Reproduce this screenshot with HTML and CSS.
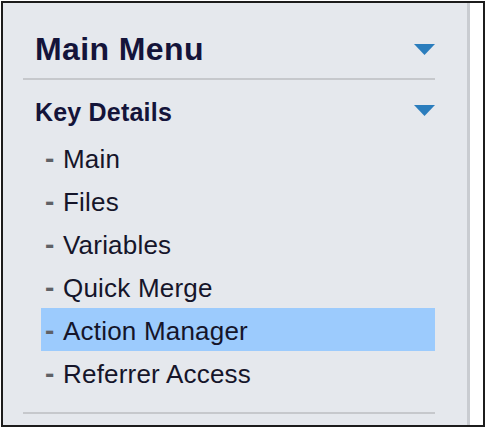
FILE: index.html
```html
<!DOCTYPE html>
<html>
<head>
<meta charset="utf-8">
<link rel="stylesheet" href="styles.css">
</head>
<body>
<div class="frame">
  <nav class="sidebar">
    <div class="menu-head">
      <span class="menu-title">Main Menu</span>
      <svg class="caret" width="21" height="11" viewBox="0 0 21 11"><polygon points="0,0 21,0 10.5,11" fill="#2b7dbd"/></svg>
    </div>
    <div class="section-head">
      <span class="section-title">Key Details</span>
      <svg class="caret caret-sm" width="21" height="11" viewBox="0 0 21 11"><polygon points="0,0 21,0 10.5,11" fill="#2b7dbd"/></svg>
    </div>
    <ul class="items">
      <li class="item"><span class="dash">-</span>Main</li>
      <li class="item"><span class="dash">-</span>Files</li>
      <li class="item"><span class="dash">-</span>Variables</li>
      <li class="item"><span class="dash">-</span>Quick Merge</li>
      <li class="item active"><span class="dash">-</span>Action Manager</li>
      <li class="item"><span class="dash">-</span>Referrer Access</li>
    </ul>
    <div class="rule"></div>
  </nav>
  <div class="gutter"></div>
</div>
</body>
</html>
```
FILE: styles.css
```css
html, body {
  margin: 0;
  padding: 0;
  background: #ffffff;
}
.frame {
  margin: 1px;
  width: 484px;
  height: 426px;
  box-sizing: border-box;
  border: 2px solid #1c1c1c;
  display: flex;
  background: #ffffff;
  overflow: hidden;
  font-family: "Liberation Sans", Arial, sans-serif;
}
.sidebar {
  flex: none;
  background: #e5e8ed;
  border-right: 3px solid #c9ccd1;
  padding: 0 32px 0 20px;
  box-sizing: content-box;
  width: 412px;
}
.gutter {
  flex: 1;
}
.menu-head {
  display: flex;
  align-items: center;
  justify-content: space-between;
  height: 40px;
  padding: 26px 0 9px 0;
  border-bottom: 2px solid #c6c8cc;
}
.menu-title {
  padding-left: 12px;
  font-size: 32px;
  font-weight: bold;
  letter-spacing: 0.4px;
  color: #14143a;
  line-height: 40px;
}
.section-head {
  display: flex;
  align-items: center;
  justify-content: space-between;
  height: 32px;
  padding: 16px 0 8px 0;
}
.section-title {
  padding-left: 12px;
  font-size: 25px;
  font-weight: bold;
  letter-spacing: 0.2px;
  color: #14143a;
  line-height: 32px;
}
.caret {
  display: block;
  flex: none;
}
.caret-sm {
  margin-bottom: 4px;
}
.items {
  list-style: none;
  margin: 0 0 0 18px;
  padding: 0;
}
.item {
  height: 42px;
  line-height: 43px;
  padding-top: 1px;
  font-size: 26px;
  letter-spacing: 0.2px;
  color: #15152a;
  padding-left: 4px;
  white-space: nowrap;
  overflow: hidden;
}
.item.active {
  background: #9ccbfd;
}
.dash {
  display: inline-block;
  width: 18px;
  font-weight: bold;
  font-size: 28px;
  color: #5f6166;
}
.rule {
  margin-top: 18px;
  border-top: 2px solid #c6c8cc;
}
```
